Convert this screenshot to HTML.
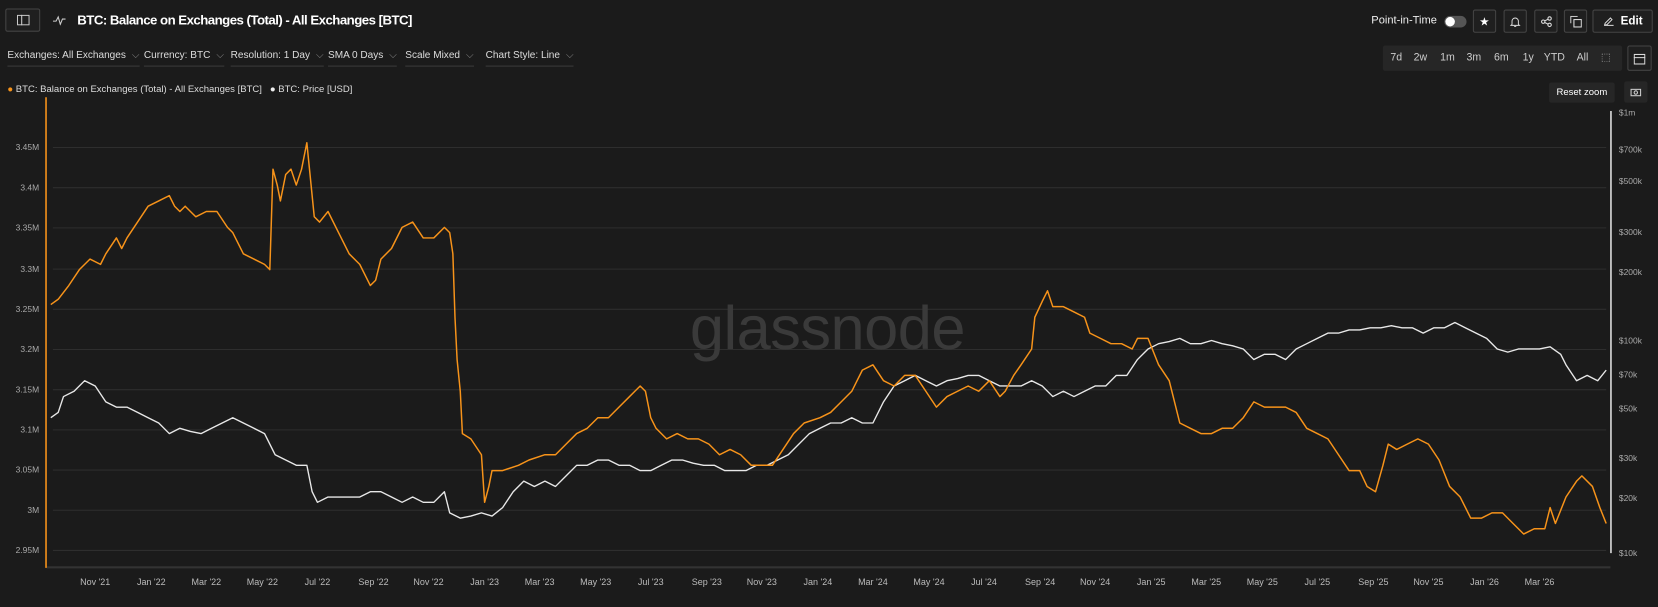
<!DOCTYPE html>
<html><head><meta charset="utf-8"><style>
html,body{margin:0;padding:0;background:#1b1b1b;overflow:hidden;width:1658px;height:607px}
#w{position:absolute;left:0;top:0;width:1567px;height:574px;transform:scale(1.0581,1.0575);transform-origin:0 0;font-family:"Liberation Sans",sans-serif;color:#e6e6e6}
.a{position:absolute}
.btn{position:absolute;border:1px solid #444;border-radius:2px;background:#1f1f1f;box-sizing:border-box;display:flex;align-items:center;justify-content:center}
.f{position:absolute;top:47px;font-size:9.5px;color:#ddd;border-bottom:1px solid #3a3a3a;padding-bottom:4px;white-space:nowrap}
.f span{color:#888;margin-left:3px}
.rg{position:absolute;top:43px;left:1307px;width:226px;height:24px;background:#262626;border-radius:2px;font-size:10px;color:#ccc}
.rg b{position:absolute;top:6px;font-weight:normal}
</style></head><body><div id="w">
<div class="btn" style="left:5px;top:8px;width:33px;height:22px"><svg width="12" height="10"><rect x="0.5" y="0.5" width="11" height="9" fill="none" stroke="#ccc"/><line x1="4.5" y1="0" x2="4.5" y2="10" stroke="#ccc"/></svg></div>
<svg class="a" style="left:50px;top:14px" width="12" height="10"><polyline points="0,6 3,6 5,2 7,9 9,4 12,4" fill="none" stroke="#ccc" stroke-width="1"/></svg>
<div class="a" style="left:73px;top:12px;font-size:12.5px;color:#fff;font-weight:bold;letter-spacing:-0.5px">BTC: Balance on Exchanges (Total) - All Exchanges [BTC]</div>

<div class="f" style="left:7px">Exchanges: All Exchanges <span>⌵</span></div>
<div class="f" style="left:136px">Currency: BTC <span>⌵</span></div>
<div class="f" style="left:218px">Resolution: 1 Day <span>⌵</span></div>
<div class="f" style="left:310px">SMA 0 Days <span>⌵</span></div>
<div class="f" style="left:383px">Scale Mixed <span>⌵</span></div>
<div class="f" style="left:459px">Chart Style: Line <span>⌵</span></div>

<div class="a" style="left:7px;top:79px;font-size:9px;color:#ddd;white-space:nowrap"><span style="color:#f7931a">●</span> BTC: Balance on Exchanges (Total) - All Exchanges [BTC] &nbsp;&nbsp;<span style="color:#eee">●</span> BTC: Price [USD]</div>

<div class="a" style="left:1296px;top:13px;font-size:10.5px;color:#eee">Point-in-Time</div>
<div class="a" style="left:1365px;top:15px;width:21px;height:11px;border-radius:6px;background:#555"><div style="position:absolute;left:1px;top:1px;width:9px;height:9px;border-radius:5px;background:#fff"></div></div>
<div class="btn" style="left:1392px;top:9px;width:22px;height:22px;color:#fff;font-size:11px">★</div>
<div class="btn" style="left:1421px;top:9px;width:22px;height:22px"><svg width="10" height="11"><path d="M2,8 L2,5 A3,3 0 0 1 8,5 L8,8 L9,9 L1,9 Z M4,10 L6,10" fill="none" stroke="#ddd" stroke-width="0.9"/></svg></div>
<div class="btn" style="left:1450px;top:9px;width:22px;height:22px"><svg width="11" height="11"><circle cx="2.5" cy="5.5" r="1.6" fill="none" stroke="#ddd"/><circle cx="8.5" cy="2.5" r="1.6" fill="none" stroke="#ddd"/><circle cx="8.5" cy="8.5" r="1.6" fill="none" stroke="#ddd"/><path d="M4,4.7 L7,3.2 M4,6.3 L7,7.8" stroke="#ddd"/></svg></div>
<div class="btn" style="left:1478px;top:9px;width:22px;height:22px"><svg width="11" height="11"><rect x="3.5" y="3.5" width="7" height="7" fill="none" stroke="#ddd"/><path d="M0.5,7 V0.5 H7" fill="none" stroke="#ddd"/></svg></div>
<div class="btn" style="left:1505px;top:9px;width:57px;height:22px;font-size:11px;color:#fff;font-weight:bold"><svg width="11" height="10" style="margin-right:6px"><path d="M1,9 L10,9 M2,7 L7,2 L8.5,3.5 L3.5,8.5 L1.5,8.5 Z" fill="none" stroke="#ddd" stroke-width="0.9"/></svg>Edit</div>

<div class="rg"><b style="left:7px">7d</b><b style="left:29px">2w</b><b style="left:54px">1m</b><b style="left:79px">3m</b><b style="left:105px">6m</b><b style="left:132px">1y</b><b style="left:152px">YTD</b><b style="left:183px">All</b><b style="left:206px;color:#999">⬚</b></div>
<div class="btn" style="left:1538px;top:43px;width:23px;height:24px"><svg width="11" height="11"><rect x="0.5" y="1.5" width="10" height="9" fill="none" stroke="#ddd"/><line x1="0" y1="4.5" x2="11" y2="4.5" stroke="#ddd"/></svg></div>
<div class="a" style="left:1464px;top:78px;width:62px;height:19px;background:#262626;border-radius:2px;font-size:9px;color:#fff;text-align:center;line-height:19px">Reset zoom</div>
<div class="a" style="left:1535px;top:77px;width:22px;height:20px;background:#262626;border-radius:2px"><svg width="22" height="20"><rect x="6.5" y="7.5" width="9" height="6" fill="none" stroke="#ccc"/><circle cx="11" cy="10.5" r="1.6" fill="none" stroke="#ccc"/></svg></div>

<svg class="a" style="left:0;top:0" width="1567" height="574" font-family="Liberation Sans, sans-serif">
<g stroke="#2e2e2e" stroke-width="1">
<line x1="50" x2="1518" y1="139.5" y2="139.5"/><line x1="50" x2="1518" y1="177.5" y2="177.5"/><line x1="50" x2="1518" y1="215.5" y2="215.5"/><line x1="50" x2="1518" y1="254.5" y2="254.5"/><line x1="50" x2="1518" y1="292.5" y2="292.5"/><line x1="50" x2="1518" y1="330.5" y2="330.5"/><line x1="50" x2="1518" y1="368.5" y2="368.5"/><line x1="50" x2="1518" y1="406.5" y2="406.5"/><line x1="50" x2="1518" y1="444.5" y2="444.5"/><line x1="50" x2="1518" y1="482.5" y2="482.5"/><line x1="50" x2="1518" y1="520.5" y2="520.5"/>
</g>
<line x1="44" x2="1522" y1="536.5" y2="536.5" stroke="#333" stroke-width="2"/>
<line x1="43.5" x2="43.5" y1="92" y2="537" stroke="#f7931a" stroke-width="1.5"/>
<line x1="1522.5" x2="1522.5" y1="105" y2="523" stroke="#ddd" stroke-width="1.5"/>
<text x="782" y="330" font-size="58" fill="#3a3a3a" text-anchor="middle" letter-spacing="-0.5">glassnode</text>
<g font-size="8" fill="#aaa" text-anchor="end">
<text x="37" y="142">3.45M</text><text x="37" y="180">3.4M</text><text x="37" y="218">3.35M</text><text x="37" y="257">3.3M</text><text x="37" y="295">3.25M</text><text x="37" y="333">3.2M</text><text x="37" y="371">3.15M</text><text x="37" y="409">3.1M</text><text x="37" y="447">3.05M</text><text x="37" y="485">3M</text><text x="37" y="523">2.95M</text>
</g>
<g font-size="8" fill="#aaa">
<text x="1530" y="109">$1m</text><text x="1530" y="144">$700k</text><text x="1530" y="174">$500k</text><text x="1530" y="222">$300k</text><text x="1530" y="260">$200k</text><text x="1530" y="325">$100k</text><text x="1530" y="357">$70k</text><text x="1530" y="389">$50k</text><text x="1530" y="436">$30k</text><text x="1530" y="474">$20k</text><text x="1530" y="526">$10k</text>
</g>
<g font-size="8.5" fill="#bbb" text-anchor="middle">
<text x="90" y="553">Nov '21</text><text x="143" y="553">Jan '22</text><text x="195" y="553">Mar '22</text><text x="248" y="553">May '22</text><text x="300" y="553">Jul '22</text><text x="353" y="553">Sep '22</text><text x="405" y="553">Nov '22</text><text x="458" y="553">Jan '23</text><text x="510" y="553">Mar '23</text><text x="563" y="553">May '23</text><text x="615" y="553">Jul '23</text><text x="668" y="553">Sep '23</text><text x="720" y="553">Nov '23</text><text x="773" y="553">Jan '24</text><text x="825" y="553">Mar '24</text><text x="878" y="553">May '24</text><text x="930" y="553">Jul '24</text><text x="983" y="553">Sep '24</text><text x="1035" y="553">Nov '24</text><text x="1088" y="553">Jan '25</text><text x="1140" y="553">Mar '25</text><text x="1193" y="553">May '25</text><text x="1245" y="553">Jul '25</text><text x="1298" y="553">Sep '25</text><text x="1350" y="553">Nov '25</text><text x="1403" y="553">Jan '26</text><text x="1455" y="553">Mar '26</text>
</g>
<polyline fill="none" stroke="#e8e8e8" stroke-width="1.3" stroke-linejoin="round" points="48,395 55,390 60,375 70,370 80,360 90,365 100,380 110,385 120,385 130,390 140,395 150,400 160,410 170,405 180,408 190,410 200,405 210,400 220,395 230,400 240,405 250,410 260,430 270,435 280,440 290,440 295,465 300,475 310,470 320,470 330,470 340,470 350,465 360,465 370,470 380,475 390,470 400,475 410,475 420,465 425,485 435,490 445,488 455,485 465,488 475,480 485,465 495,455 505,460 515,455 525,460 535,450 545,440 555,440 565,435 575,435 585,440 595,440 605,445 615,445 625,440 635,435 645,435 655,438 665,440 675,440 685,445 695,445 705,445 715,440 725,440 735,435 745,430 755,420 765,410 775,405 785,400 795,400 805,395 815,400 825,400 835,380 845,365 855,360 865,355 875,360 885,365 895,360 905,358 915,355 925,355 935,360 945,365 955,365 965,365 975,360 985,365 995,375 1005,370 1015,375 1025,370 1035,365 1045,365 1055,355 1065,355 1075,340 1085,330 1095,325 1105,323 1115,320 1125,325 1135,325 1145,322 1155,325 1165,327 1175,330 1185,340 1195,335 1205,335 1215,340 1225,330 1235,325 1245,320 1255,315 1265,315 1275,312 1285,312 1295,310 1305,310 1315,308 1325,310 1335,310 1345,315 1355,310 1365,310 1375,305 1385,310 1395,315 1405,320 1415,330 1425,333 1435,330 1445,330 1455,330 1465,328 1475,335 1480,345 1490,360 1500,355 1510,360 1518,350"/>
<polyline fill="none" stroke="#f7931a" stroke-width="1.4" stroke-linejoin="round" points="48,288 55,283 65,270 75,255 85,245 95,250 100,240 110,225 115,235 120,225 130,210 140,195 150,190 160,185 165,195 170,200 175,195 185,205 195,200 205,200 215,215 220,220 230,240 240,245 250,250 255,255 258,160 262,175 265,190 270,165 275,160 280,175 285,160 290,135 293,165 297,205 302,210 310,200 320,220 330,240 340,250 350,270 355,265 360,245 370,235 380,215 390,210 400,225 410,225 420,215 425,220 428,240 430,300 432,340 435,370 437,410 445,415 455,430 458,475 462,460 465,445 475,445 490,440 500,435 515,430 525,430 535,420 545,410 555,405 565,395 575,395 585,385 595,375 605,365 610,370 615,395 620,405 630,415 640,410 650,415 660,415 670,420 680,430 690,425 700,430 710,440 720,440 730,440 740,425 750,410 760,400 775,395 785,390 795,380 805,370 815,350 825,345 835,360 845,365 855,355 865,355 875,370 885,385 895,375 905,370 915,365 925,370 935,360 945,375 950,370 958,355 965,345 975,330 978,300 985,285 990,275 995,290 1005,290 1015,295 1025,300 1030,315 1040,320 1050,325 1060,325 1070,330 1075,320 1085,320 1095,345 1105,360 1110,380 1115,400 1125,405 1135,410 1145,410 1155,405 1165,405 1175,395 1185,380 1195,385 1205,385 1215,385 1225,390 1235,405 1245,410 1255,415 1265,430 1275,445 1285,445 1292,460 1300,465 1307,440 1312,420 1320,425 1330,420 1340,415 1350,420 1360,435 1370,460 1380,470 1390,490 1400,490 1410,485 1420,485 1430,495 1440,505 1450,500 1460,500 1465,480 1470,495 1480,470 1490,455 1495,450 1505,460 1512,480 1518,495"/>
</svg>
</div></body></html>
